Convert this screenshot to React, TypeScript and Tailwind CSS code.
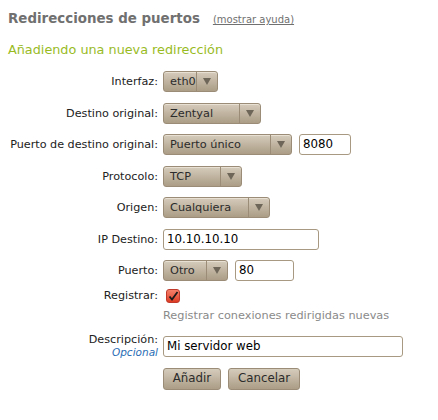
import React from "react";

const font = { fontFamily: '"DejaVu Sans", Verdana, sans-serif' };

const Select = ({ value, width }: { value: string; width: string }) => (
  <div
    className={`flex h-[21px] ${width} rounded-[3px] border border-[#9a8c76] bg-gradient-to-b from-[#d6ccbc] to-[#ab9d86] text-[11.3px] text-[#2b2b2b] shadow-[inset_0_1px_0_#e8e0d2]`}
  >
    <span className="flex-1 overflow-hidden whitespace-nowrap pl-[6px] pt-[2px] leading-[16px]">
      {value}
    </span>
    <span className="flex w-[21px] items-center justify-center border-l border-[#9a8c76]">
      <svg width="8" height="7" viewBox="0 0 8 7">
        <path d="M0 0 H8 L4 7 Z" fill="#6e6658" />
      </svg>
    </span>
  </div>
);

const Input = ({ value, width }: { value: string; width: string }) => (
  <div
    className={`h-[21px] ${width} rounded-[3px] border border-[#a89a82] bg-white pl-[3px] text-[11.8px] leading-[19px] text-black`}
  >
    {value}
  </div>
);

const Button = ({ text, width }: { text: string; width: string }) => (
  <div
    className={`flex h-[22px] ${width} items-center justify-center rounded-[3px] border border-[#9a8c76] bg-gradient-to-b from-[#d6ccbc] to-[#ab9d86] text-[11.8px] text-[#2b2b2b]`}
  >
    {text}
  </div>
);

const Row = ({
  label,
  children,
}: {
  label: string;
  children: React.ReactNode;
}) => (
  <div className="flex items-start gap-[5px]">
    <div className="w-[158px] shrink-0 whitespace-nowrap text-right text-[11.2px] leading-[21px] text-[#222]">
      {label}
    </div>
    <div className="flex items-center gap-[7px]">{children}</div>
  </div>
);

export default function App() {
  return (
    <div className="h-[420px] w-[438px] bg-white" style={font}>
      <div className="flex items-baseline gap-[13px] pl-[8px] pt-[9px]">
        <span className="text-[13.4px] font-bold text-[#707070]">
          Redirecciones de puertos
        </span>
        <span className="text-[10px] text-[#707070] underline">
          (mostrar ayuda)
        </span>
      </div>
      <div className="pl-[8px] pt-[11px] text-[12.8px] text-[#99bb1f]">
        Añadiendo una nueva redirección
      </div>

      <div className="mt-[12px] flex flex-col gap-[10.5px]">
        <Row label="Interfaz:">
          <Select value="eth0" width="w-[55px]" />
        </Row>
        <Row label="Destino original:">
          <Select value="Zentyal" width="w-[98px]" />
        </Row>
        <Row label="Puerto de destino original:">
          <Select value="Puerto único" width="w-[129px]" />
          <Input value="8080" width="w-[52px]" />
        </Row>
        <Row label="Protocolo:">
          <Select value="TCP" width="w-[79px]" />
        </Row>
        <Row label="Origen:">
          <Select value="Cualquiera" width="w-[107px]" />
        </Row>
        <Row label="IP Destino:">
          <Input value="10.10.10.10" width="w-[156px]" />
        </Row>
        <Row label="Puerto:">
          <Select value="Otro" width="w-[65px]" />
          <Input value="80" width="w-[59px]" />
        </Row>
      </div>

      <div className="mt-[6px] flex gap-[5px]">
        <div className="w-[158px] shrink-0 text-right text-[11.2px] leading-[18px] text-[#222]">
          Registrar:
        </div>
        <div className="flex flex-col">
          <div className="ml-[3px] mt-[2px] flex h-[14px] w-[14px] items-center justify-center rounded-[3px] border border-[#c0392b] bg-gradient-to-b from-[#f6806a] to-[#dd3a22]">
            <svg width="11" height="10" viewBox="0 0 11 10">
              <path
                d="M1.5 5.5 L4 8.5 L9.5 1"
                fill="none"
                stroke="#1a1a1a"
                strokeWidth="1.8"
              />
            </svg>
          </div>
          <div className="mt-[5px] text-[11.3px] leading-[16px] text-[#8a8a8a]">
            Registrar conexiones redirigidas nuevas
          </div>
        </div>
      </div>

      <div className="mt-[12px] flex items-start gap-[5px]">
        <div className="-mt-[3px] w-[158px] shrink-0 text-right text-[#222]">
          <div className="text-[11.2px] leading-[14px]">Descripción:</div>
          <div className="text-[10.5px] italic leading-[11px] text-[#2a6db5]">
            Opcional
          </div>
        </div>
        <Input value="Mi servidor web" width="w-[240px]" />
      </div>

      <div className="mt-[10px] flex gap-[7px] pl-[163px]">
        <Button text="Añadir" width="w-[58px]" />
        <Button text="Cancelar" width="w-[72px]" />
      </div>
    </div>
  );
}
